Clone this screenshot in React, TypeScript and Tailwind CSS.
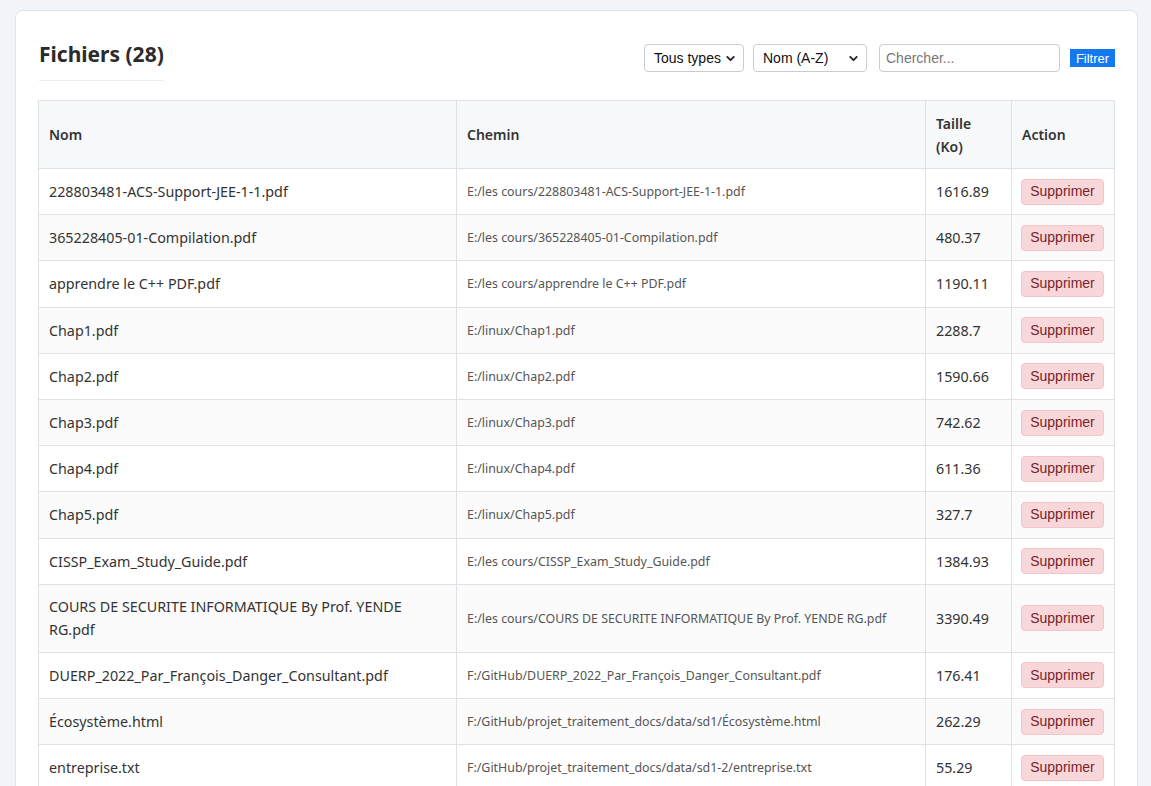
import { ChevronDown } from "lucide-react";

type FileRow = {
  name: string;
  path: string;
  size: string;
};

const files: FileRow[] = [
  { name: "228803481-ACS-Support-JEE-1-1.pdf", path: "E:/les cours/228803481-ACS-Support-JEE-1-1.pdf", size: "1616.89" },
  { name: "365228405-01-Compilation.pdf", path: "E:/les cours/365228405-01-Compilation.pdf", size: "480.37" },
  { name: "apprendre le C++ PDF.pdf", path: "E:/les cours/apprendre le C++ PDF.pdf", size: "1190.11" },
  { name: "Chap1.pdf", path: "E:/linux/Chap1.pdf", size: "2288.7" },
  { name: "Chap2.pdf", path: "E:/linux/Chap2.pdf", size: "1590.66" },
  { name: "Chap3.pdf", path: "E:/linux/Chap3.pdf", size: "742.62" },
  { name: "Chap4.pdf", path: "E:/linux/Chap4.pdf", size: "611.36" },
  { name: "Chap5.pdf", path: "E:/linux/Chap5.pdf", size: "327.7" },
  { name: "CISSP_Exam_Study_Guide.pdf", path: "E:/les cours/CISSP_Exam_Study_Guide.pdf", size: "1384.93" },
  {
    name: "COURS DE SECURITE INFORMATIQUE By Prof. YENDE RG.pdf",
    path: "E:/les cours/COURS DE SECURITE INFORMATIQUE By Prof. YENDE RG.pdf",
    size: "3390.49",
  },
  {
    name: "DUERP_2022_Par_François_Danger_Consultant.pdf",
    path: "F:/GitHub/DUERP_2022_Par_François_Danger_Consultant.pdf",
    size: "176.41",
  },
  { name: "Écosystème.html", path: "F:/GitHub/projet_traitement_docs/data/sd1/Écosystème.html", size: "262.29" },
  { name: "entreprise.txt", path: "F:/GitHub/projet_traitement_docs/data/sd1-2/entreprise.txt", size: "55.29" },
];

const bodyFont = "font-['Noto_Sans',sans-serif]";
const formFont = "font-['Liberation_Sans',Arial,sans-serif]";

function Select({ label, width }: { label: string; width: string }) {
  return (
    <div
      className={`${width} h-[28px] flex items-center justify-between pl-[9px] pr-[6px] bg-white border border-[#c9ccd1] rounded-[4px] text-[14px] text-[#111] ${formFont}`}
    >
      <span>{label}</span>
      <ChevronDown size={13} strokeWidth={3.4} className="text-[#222]" />
    </div>
  );
}

export default function App() {
  return (
    <div className={`min-h-screen bg-[#f1f4f8] pl-[15px] pr-[13px] pt-[10px] ${bodyFont}`}>
      <div className="bg-white rounded-[8px] border border-[#e2e5ea] px-[22px] pt-[28px] pb-8">
        <div className="flex items-start justify-between">
          <h2 className="ml-px inline-block text-[21px] leading-[30px] font-bold text-[#2b2b2b] pb-[11px] border-b border-[#ececec]">
            Fichiers (28)
          </h2>
          <div className="flex items-center mt-[5px]">
            <Select label="Tous types" width="w-[100px]" />
            <div className="ml-[9px]">
              <Select label="Nom (A-Z)" width="w-[114px]" />
            </div>
            <div
              className={`ml-[12px] w-[181px] h-[28px] flex items-center px-[6px] border border-[#c9ccd1] rounded-[4px] text-[14px] text-[#777] ${formFont}`}
            >
              Chercher...
            </div>
            <button
              className={`ml-[10px] w-[45px] h-[18px] bg-[#1479f0] text-white text-[13px] leading-none ${formFont}`}
            >
              Filtrer
            </button>
          </div>
        </div>

        <table className="mt-[19px] w-[1076px] table-fixed border-collapse border border-[#dee2e6] text-[14.3px] text-[#333]">
          <colgroup>
            <col className="w-[418px]" />
            <col className="w-[469px]" />
            <col className="w-[86px]" />
            <col className="w-[103px]" />
          </colgroup>
          <thead>
            <tr className="bg-[#f7f8fa]">
              {["Nom", "Chemin", "Taille (Ko)", "Action"].map((h) => (
                <th
                  key={h}
                  className="border border-[#dee2e6] px-[10px] py-[10.5px] text-left font-semibold leading-[23px] text-[14px] text-[#333]"
                >
                  {h}
                </th>
              ))}
            </tr>
          </thead>
          <tbody>
            {files.map((f, i) => (
              <tr key={f.name} className={i % 2 === 1 ? "bg-[#fbfbfb]" : "bg-white"}>
                <td className="border border-[#dee2e6] px-[10px] py-[10.6px] leading-[23px]">{f.name}</td>
                <td className="border border-[#dee2e6] px-[10px] py-[10.6px] leading-[23px] text-[12.4px] text-[#555]">
                  {f.path}
                </td>
                <td className="border border-[#dee2e6] px-[10px] py-[10.6px] leading-[23px]">{f.size}</td>
                <td className="border border-[#dee2e6] px-[9px] py-[9.6px] leading-[23px]">
                  <button
                    className={`block w-[83px] h-[26px] rounded-[4px] bg-[#f8d7da] border border-[#f3c4c9] text-[#7a1f29] text-[14px] ${formFont}`}
                  >
                    Supprimer
                  </button>
                </td>
              </tr>
            ))}
          </tbody>
        </table>
      </div>
    </div>
  );
}
